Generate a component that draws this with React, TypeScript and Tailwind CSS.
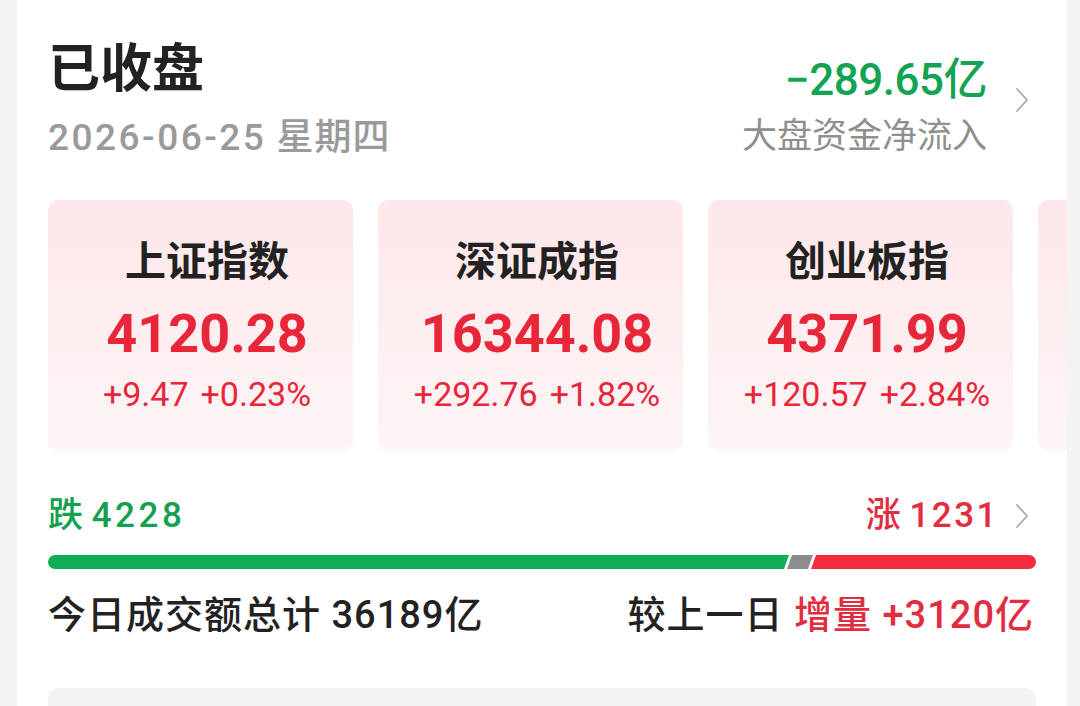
import React from "react";

type IndexCard = {
  name: string;
  price: string;
  change: string;
  percent: string;
};

const indices: IndexCard[] = [
  { name: "上证指数", price: "4120.28", change: "+9.47", percent: "+0.23%" },
  { name: "深证成指", price: "16344.08", change: "+292.76", percent: "+1.82%" },
  { name: "创业板指", price: "4371.99", change: "+120.57", percent: "+2.84%" },
];

const Chevron = () => (
  <svg width="14" height="26" viewBox="0 0 14 26" fill="none">
    <polyline points="2,2 12,13 2,24" stroke="#a8a8a8" strokeWidth="1.8" strokeLinecap="round" strokeLinejoin="round" />
  </svg>
);

const App: React.FC = () => {
  return (
    <div className="h-[706px] w-[1080px] overflow-hidden bg-[#f3f3f3] font-['Roboto','Noto_Sans_CJK_SC',sans-serif]">
      <div className="ml-[17px] h-full w-[1050px] overflow-hidden bg-white pl-[31px] pr-[31px] pt-[38px]">
        {/* header */}
        <div className="flex justify-between">
          <div>
            <div className="text-[52px] font-bold leading-[64px] text-[#222]">已收盘</div>
            <div className="mt-[14px] text-[37px] font-medium leading-[44px] text-[#9a9a9a]">
              <span className="tracking-[2.5px]">2026-06-25</span>
              <span className="ml-[10px] tracking-[1px]">星期四</span>
            </div>
          </div>
          <div className="flex items-start pt-[18px]">
            <div className="text-right">
              <div className="text-[44px] font-medium leading-[48px] tracking-[-0.5px] text-[#14a352]">−289.65亿</div>
              <div className="mt-[13px] text-[35px] leading-[40px] text-[#8f8f8f]">大盘资金净流入</div>
            </div>
            <div className="ml-[28px] mt-[31px] w-[21px]">
              <Chevron />
            </div>
          </div>
        </div>

        {/* index cards, the last one peeks in from the right edge */}
        <div className="mt-[40px] flex gap-[25px]">
          {indices.map((it) => (
            <div
              key={it.name}
              className="flex h-[251px] w-[305px] shrink-0 flex-col items-center rounded-[10px] bg-gradient-to-b from-[#fde7e9] to-[#fdf5f6] pl-[13px] pt-[38px]"
            >
              <div className="text-[41px] font-bold leading-[48px] text-[#222]">{it.name}</div>
              <div className="mt-[16px] text-[54px] font-bold leading-[64px] text-[#e8263a]">{it.price}</div>
              <div className="mt-[8px] flex gap-[12px] text-[34px] leading-[40px] text-[#e8263a]">
                <span>{it.change}</span>
                <span>{it.percent}</span>
              </div>
            </div>
          ))}
          <div className="h-[251px] w-[305px] shrink-0 rounded-[10px] bg-gradient-to-b from-[#fde7e9] to-[#fdf5f6]" />
        </div>

        {/* rise / fall counts */}
        <div className="mt-[43px] flex items-center justify-between">
          <div className="text-[35px] font-medium leading-[44px] text-[#13a150]">
            跌 <span className="tracking-[3.5px]">4228</span>
          </div>
          <div className="flex items-center">
            <div className="text-[35px] font-medium leading-[44px] text-[#e22d40]">
              涨 <span className="tracking-[2.5px]">1231</span>
            </div>
            <div className="ml-[16px] w-[21px]">
              <Chevron />
            </div>
          </div>
        </div>

        <div className="mt-[17px] flex h-[14px]">
          <div className="w-[741px] rounded-l-full bg-[#0fae55] [clip-path:polygon(0_0,100%_0,calc(100%-5px)_100%,0_100%)]" />
          <div className="ml-[-2px] w-[26px] bg-[#8c8c8c] [clip-path:polygon(5px_0,100%_0,calc(100%-5px)_100%,0_100%)]" />
          <div className="ml-[-2px] flex-1 rounded-r-full bg-[#f42a3d] [clip-path:polygon(5px_0,100%_0,100%_100%,0_100%)]" />
        </div>

        {/* turnover */}
        <div className="mt-[24px] flex items-center justify-between text-[38px] font-medium leading-[44px] tracking-[1px] text-[#222]">
          <div>今日成交额总计 36189亿</div>
          <div className="pr-[2px]">
            较上一日 <span className="text-[#e22d40]">增量 +3120亿</span>
          </div>
        </div>

        <div className="mt-[51px] h-[40px] rounded-t-[12px] bg-[#f3f3f3]" />
      </div>
    </div>
  );
};

export default App;
